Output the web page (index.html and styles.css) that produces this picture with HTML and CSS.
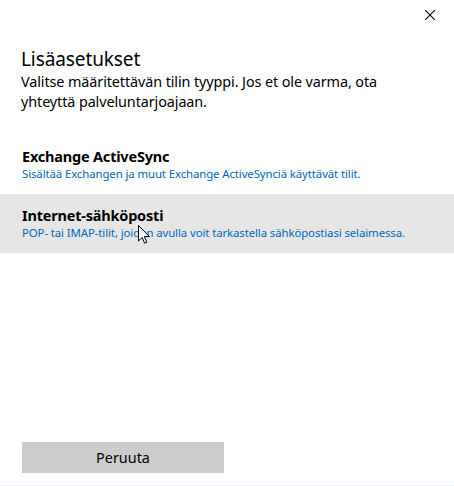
FILE: index.html
```html
<!DOCTYPE html>
<html lang="fi">
<head>
    <meta charset="UTF-8">
    <title>Lisäasetukset</title>
    <link rel="stylesheet" href="styles.css">
</head>
<body>
    <div class="dialog">
        <div class="titlebar">
            <button class="close-btn" title="Sulje">
                <svg width="10" height="10" viewBox="0 0 10 10"><path d="M0 0L10 10M10 0L0 10" stroke="#000" stroke-width="1.1"/></svg>
            </button>
        </div>

        <header class="intro">
            <h1>Lisäasetukset</h1>
            <p>Valitse määritettävän tilin tyyppi. Jos et ole varma, ota yhteyttä palveluntarjoajaan.</p>
        </header>

        <ul class="account-list">
            <li class="account">
                <span class="account-name">Exchange ActiveSync</span>
                <span class="account-desc">Sisältää Exchangen ja muut Exchange ActiveSynciä käyttävät tilit.</span>
            </li>
            <li class="account hover">
                <span class="account-name">Internet-sähköposti</span>
                <span class="account-desc">POP- tai IMAP-tilit, joiden avulla voit tarkastella sähköpostiasi selaimessa.</span>
                <svg class="cursor" width="12" height="19" viewBox="0 0 12 19"><path d="M0.5 0.5V16L4.2 12.4L6.6 18.2L8.8 17.3L6.4 11.6H11.5Z" fill="#fff" stroke="#000" stroke-width="1"/></svg>
            </li>
        </ul>

        <footer class="actions">
            <button class="btn-cancel">Peruuta</button>
        </footer>
    </div>
</body>
</html>
```

FILE: styles.css
```css
:root {
    --bg-color: #ffffff; --text-color: #000000; --link-color: #0067b8;
    --hover-color: #e6e6e6; --button-color: #cccccc; --edge-color: #e3f6f8;
}
html, body { margin: 0; padding: 0; }
body { font-family: 'Noto Sans', 'Open Sans', sans-serif; background-color: var(--bg-color); color: var(--text-color); width: 454px; height: 486px; overflow: hidden; }
.dialog { height: 485px; border-bottom: 1px solid var(--edge-color); display: flex; flex-direction: column; }
.titlebar { display: flex; justify-content: flex-end; height: 30px; }
.close-btn { width: 46px; height: 30px; border: none; background: none; padding: 0; display: flex; align-items: center; justify-content: center; margin-right: 1px; }
.intro { padding: 16px 60px 0 21px; }
.intro h1 { font-size: 19px; font-weight: 400; margin: 0; line-height: 26px; letter-spacing: -0.1px; }
.intro p { font-size: 14.4px; margin: 0; line-height: 20px; letter-spacing: -0.1px; }
.account-list { list-style: none; margin: 0; padding: 0; margin-top: 23px; }
.account { display: flex; flex-direction: column; padding: 11px 22px 12px; position: relative; height: 36px; }
.account.hover { background-color: var(--hover-color); }
.account-name { font-size: 14.5px; font-weight: 700; line-height: 20px; letter-spacing: -0.2px; }
.account-desc { font-size: 11.4px; color: var(--link-color); line-height: 16px; letter-spacing: -0.1px; }
.cursor { position: absolute; left: 138px; top: 31px; }
.actions { margin-top: auto; padding: 0 22px 12px; }
.btn-cancel { width: 202px; height: 31px; border: none; background-color: var(--button-color); font-family: inherit; font-size: 14.4px; color: #000; padding: 0; }
```
